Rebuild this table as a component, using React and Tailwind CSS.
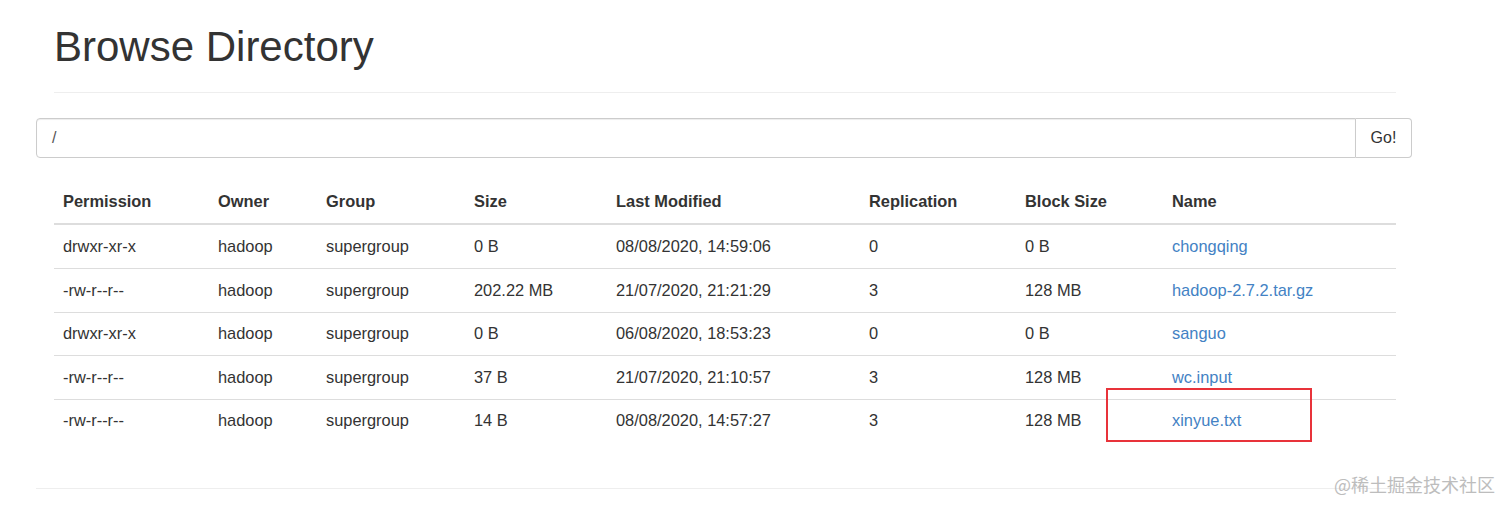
import React from "react";

const cols = [
  "Permission",
  "Owner",
  "Group",
  "Size",
  "Last Modified",
  "Replication",
  "Block Size",
  "Name",
];

const rows = [
  ["drwxr-xr-x", "hadoop", "supergroup", "0 B", "08/08/2020, 14:59:06", "0", "0 B", "chongqing"],
  ["-rw-r--r--", "hadoop", "supergroup", "202.22 MB", "21/07/2020, 21:21:29", "3", "128 MB", "hadoop-2.7.2.tar.gz"],
  ["drwxr-xr-x", "hadoop", "supergroup", "0 B", "06/08/2020, 18:53:23", "0", "0 B", "sanguo"],
  ["-rw-r--r--", "hadoop", "supergroup", "37 B", "21/07/2020, 21:10:57", "3", "128 MB", "wc.input"],
  ["-rw-r--r--", "hadoop", "supergroup", "14 B", "08/08/2020, 14:57:27", "3", "128 MB", "xinyue.txt"],
];

const grid =
  "grid grid-cols-[155px_108px_148px_142px_253px_156px_147px_233px]";

export default function App() {
  return (
    <div
      className="relative w-[1512px] h-[510px] bg-white overflow-hidden text-[#333]"
      style={{ fontFamily: '"Liberation Sans", Arial, sans-serif' }}
    >
      <div className="pl-[36px] pt-[24px]">
        <div className="ml-[18px] w-[1342px]">
          <h1 className="text-[42px] leading-[46px] font-normal text-[#333]">
            Browse Directory
          </h1>
          <div className="mt-[22px] h-px bg-[#eeeeee]" />
        </div>

        <div className="mt-[25px] w-[1376px] h-[40px] flex">
          <div className="flex-1 flex items-center border border-[#cccccc] rounded-l-[4px] shadow-[inset_0_1px_1px_rgba(0,0,0,0.075)] pl-[15px] text-[16px] text-[#555]">
            /
          </div>
          <div className="w-[56px] flex items-center justify-center border border-l-0 border-[#cccccc] rounded-r-[4px] text-[16px] text-[#333] bg-white">
            Go!
          </div>
        </div>

        <div className="ml-[18px] mt-[21px] w-[1342px] text-[16.4px]">
          <div className={`${grid} h-[46px] items-center border-b-2 border-[#dddddd] font-bold`}>
            {cols.map((c) => (
              <div key={c} className="px-[9px]">
                {c}
              </div>
            ))}
          </div>
          {rows.map((r, i) => (
            <div
              key={i}
              className={`${grid} ${i === 0 ? "h-[43px]" : "h-[43.5px] border-t border-[#dddddd]"} items-center`}
            >
              {r.map((v, j) => (
                <div
                  key={j}
                  className={`px-[9px] whitespace-nowrap ${j === 7 ? "text-[#4382c4]" : ""}`}
                >
                  {v}
                </div>
              ))}
            </div>
          ))}
        </div>

        <div className="mt-[46px] w-[1376px] h-px bg-[#eeeeee]" />
      </div>

      <div className="absolute left-[1106px] top-[388px] w-[206px] h-[54px] border-[2.5px] border-[#e8333a]" />

      <div
        className="absolute left-[1334px] top-[472px] text-[18px] leading-[24px] text-[#bdbdbd]"
        style={{ fontFamily: '"Noto Sans CJK SC", "Noto Sans", sans-serif' }}
      >
        @稀土掘金技术社区
      </div>
    </div>
  );
}
